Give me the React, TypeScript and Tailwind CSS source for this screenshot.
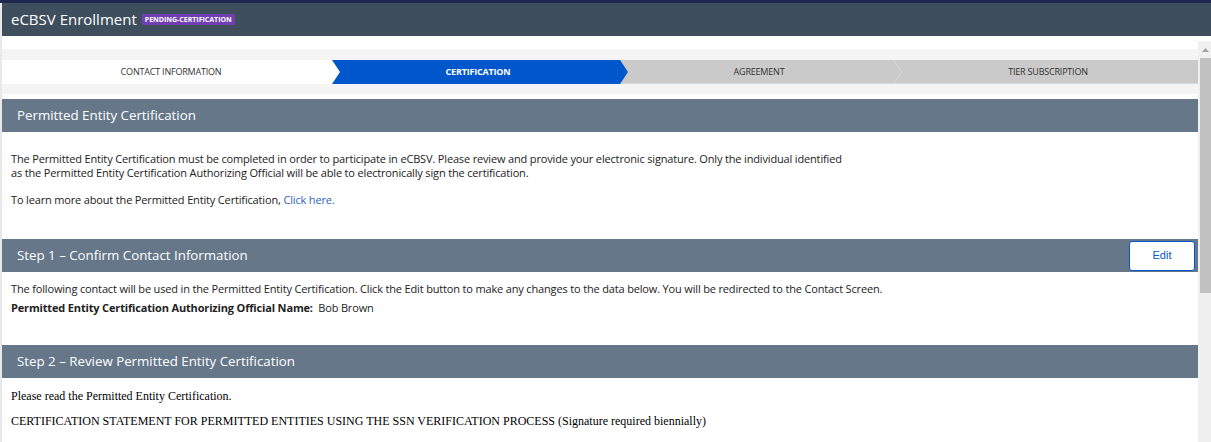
import React from "react";

const sans = { fontFamily: '"Open Sans", "Noto Sans", sans-serif' };

function SectionHeader({ title, children }: { title: string; children?: React.ReactNode }) {
  return (
    <div className="flex h-[33px] items-center justify-between bg-[#657789] pl-[15px] pr-[3px]">
      <span className="text-[13.3px] text-white">{title}</span>
      {children}
    </div>
  );
}

export default function App() {
  return (
    <div className="flex h-[442px] w-[1211px] flex-col overflow-hidden bg-white text-[#222]" style={sans}>
      <div className="h-[3px] shrink-0 bg-[#1f2850]" />
      <div className="flex min-h-0 flex-1">
        <div className="w-[2px] shrink-0 bg-[#e8e8e8]" />
        <div className="flex min-w-0 flex-1 flex-col">
          <div className="flex h-[33px] shrink-0 items-center gap-[5px] bg-[#3f4e5d] pl-[9px]">
            <span className="text-[15px] text-white">eCBSV Enrollment</span>
            <span className="flex h-[11px] items-center bg-[#7040b2] px-[3px] text-[7px] font-bold leading-none text-white">
              PENDING-CERTIFICATION
            </span>
          </div>
          <div className="flex min-h-0 flex-1">
            <div className="flex min-w-0 flex-1 flex-col">
              <div className="h-[13px] shrink-0 bg-white" />
              <div className="shrink-0 bg-[#f4f4f4] py-[11px] pb-[10px]">
                <div className="relative flex h-[24px] bg-[#cacaca] text-[9px] tracking-[-0.2px]">
                  <div className="relative z-[4] -mr-[8px] flex w-[338px] items-center justify-center bg-white text-[#333] [clip-path:polygon(0_0,calc(100%-8px)_0,100%_50%,calc(100%-8px)_100%,0_100%)]">
                    CONTACT INFORMATION
                  </div>
                  <div className="relative z-[3] -mr-[8px] flex w-[296px] items-center justify-center bg-[#0057cc] pr-[4px] font-bold text-white [clip-path:polygon(0_0,calc(100%-8px)_0,100%_50%,calc(100%-8px)_100%,0_100%)]">
                    CERTIFICATION
                  </div>
                  <div className="relative z-[2] flex w-[274px] items-center justify-center pl-[4px] text-[#333]">
                    AGREEMENT
                    <svg className="absolute right-[-8px] top-0" width="9" height="24" viewBox="0 0 9 24">
                      <polyline points="0.5,0 8.5,12 0.5,24" fill="none" stroke="#d8d8d8" strokeWidth="1" />
                    </svg>
                  </div>
                  <div className="flex flex-1 items-center justify-center pl-[4px] text-[#333]">TIER SUBSCRIPTION</div>
                  <div className="absolute bottom-0 left-0 right-0 h-px bg-[#d2dbe6]" />
                </div>
              </div>
              <div className="h-[5px] shrink-0 bg-white" />

              <SectionHeader title="Permitted Entity Certification" />
              <div className="px-[9px] pb-[32px] pt-[20px] text-[11px] leading-[14px] tracking-[-0.16px]">
                <p>
                  The Permitted Entity Certification must be completed in order to participate in eCBSV. Please review and provide your electronic signature. Only the individual identified
                  <br />
                  as the Permitted Entity Certification Authorizing Official will be able to electronically sign the certification.
                </p>
                <p className="mt-[13px]">
                  To learn more about the Permitted Entity Certification, <span className="text-[#2d5fc4]">Click here.</span>
                </p>
              </div>

              <SectionHeader title="Step 1 – Confirm Contact Information">
                <button
                  className="flex h-[30px] w-[66px] items-center justify-center rounded-[3px] border border-[#0057cc] bg-white text-[11px] text-[#0057cc]"
                  style={{ fontFamily: '"Liberation Sans", Arial, sans-serif' }}
                >
                  Edit
                </button>
              </SectionHeader>
              <div className="px-[9px] pb-[30px] pt-[10px] text-[11px] leading-[14px] tracking-[-0.16px]">
                <p>
                  The following contact will be used in the Permitted Entity Certification. Click the Edit button to make any changes to the data below. You will be redirected to the Contact Screen.
                </p>
                <p className="mt-[5px]">
                  <span className="font-bold">Permitted Entity Certification Authorizing Official Name:</span>&nbsp; Bob Brown
                </p>
              </div>

              <SectionHeader title="Step 2 – Review Permitted Entity Certification" />
              <div
                className="px-[9px] pt-[11px] text-[12px] leading-[14px] text-black"
                style={{ fontFamily: '"Liberation Serif", "Times New Roman", serif' }}
              >
                <p>Please read the Permitted Entity Certification.</p>
                <p className="mt-[11px]">
                  CERTIFICATION STATEMENT FOR PERMITTED ENTITIES USING THE SSN VERIFICATION PROCESS (Signature required biennially)
                </p>
              </div>
            </div>
            <div className="mt-[5px] flex w-[13px] shrink-0 flex-col items-center bg-[#f0f0f0] pl-[1px]">
              <div className="flex h-[17px] w-full items-center justify-center">
                <svg width="7" height="4" viewBox="0 0 7 4">
                  <polygon points="0,4 3.5,0 7,4" fill="#a3a3a3" />
                </svg>
              </div>
              <div className="h-[235px] w-[11px] bg-[#c1c1c1]" />
            </div>
          </div>
        </div>
      </div>
    </div>
  );
}
